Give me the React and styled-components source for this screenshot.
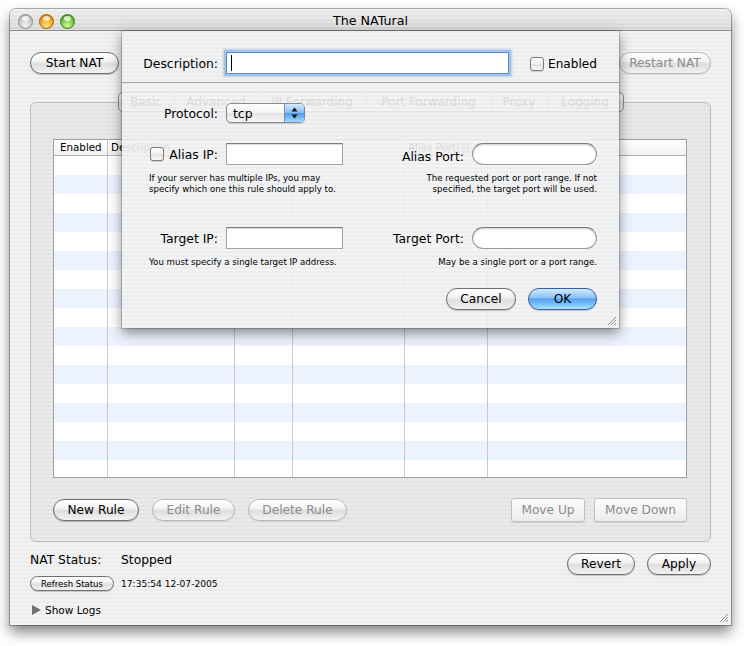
import React from 'react';
import styled, { createGlobalStyle, css } from 'styled-components';

const pinstripe = `repeating-linear-gradient(to bottom, #ececec 0px, #ececec 2px, #f3f3f3 2px, #f3f3f3 4px)`;

const GlobalStyle = createGlobalStyle`
  html, body { margin: 0; padding: 0; background: #fff; }
  body { font-family: "DejaVu Sans", "Noto Sans", sans-serif; color: #000; }
  * { box-sizing: border-box; }
`;

const Page = styled.div`
  width: 748px;
  height: 646px;
  padding: 9px 0 0 10px;
`;

const Window = styled.div`
  width: 721px;
  height: 616px;
  border-radius: 6px 6px 0 0;
  box-shadow: 0 0 0 1px rgba(0, 0, 0, 0.3), 0 7px 14px rgba(0, 0, 0, 0.5);
  background: ${pinstripe};
  display: flex;
  flex-direction: column;
  overflow: hidden;
`;

const TitleBar = styled.div`
  height: 22px;
  padding-top: 3px;
  display: grid;
  grid-template-columns: 1fr auto 1fr;
  align-items: center;
  border-bottom: 1px solid #8c8c8c;
  background: repeating-linear-gradient(to bottom, rgba(255,255,255,0.25) 0 2px, rgba(0,0,0,0) 2px 4px),
    linear-gradient(#ececec, #d3d3d3);
  border-radius: 6px 6px 0 0;
`;

const Lights = styled.div`
  display: flex;
  gap: 6px;
  padding-left: 8px;
`;

const lightColors = {
  gray: ['#f6f6f6', '#c9c9c9', '#9e9e9e', '#8a8a8a'],
  orange: ['#ffe08a', '#f5a21e', '#c66a00', '#a65a00'],
  green: ['#d4fa9a', '#70c43c', '#3c8a1a', '#367a18'],
};

const Light = styled.span`
  position: relative;
  width: 15px;
  height: 15px;
  border-radius: 50%;
  border: 1px solid ${p => lightColors[p.$c][3]};
  background: radial-gradient(circle at 50% 80%, ${p => lightColors[p.$c][0]} 0%, ${p => lightColors[p.$c][1]} 55%, ${p => lightColors[p.$c][2]} 100%);
  &::after {
    content: '';
    position: absolute;
    left: 3px;
    top: 1px;
    width: 7px;
    height: 5px;
    border-radius: 50%;
    background: rgba(255, 255, 255, 0.75);
  }
`;

const Title = styled.div`
  font-size: 12.7px;
  line-height: 18px;
`;

const Content = styled.div`
  position: relative;
  flex: 1;
  padding: 21px 20px 0;
`;

const Toolbar = styled.div`
  display: flex;
  justify-content: space-between;
`;

const PushButton = styled.div`
  width: ${p => p.$w}px;
  height: ${p => (p.$small ? 15 : 22)}px;
  border-radius: ${p => (p.$small ? 8 : 11)}px;
  display: flex;
  align-items: center;
  justify-content: center;
  font-size: ${p => (p.$small ? 8.5 : 12.2)}px;
  color: ${p => (p.$disabled ? '#8c8c8c' : '#000')};
  border: 1px solid ${p => (p.$disabled ? '#b9b9b9' : '#6f6f6f')};
  background: linear-gradient(#ffffff 0%, #f4f4f4 40%, #dedede 55%, #f2f2f2 100%);
  box-shadow: 0 1px 1px rgba(0, 0, 0, ${p => (p.$disabled ? 0.06 : 0.2)});
  ${p => p.$primary && css`
    border-color: #36619f;
    background: linear-gradient(#d4eafd 0%, #8cc5f8 42%, #58a3f0 52%, #7fc6fb 80%, #b3e1fe 100%);
  `}
`;

const BevelButton = styled.div`
  width: ${p => p.$w}px;
  height: 24px;
  border-radius: 3px;
  display: flex;
  align-items: center;
  justify-content: center;
  font-size: 12.2px;
  color: #8a8a8a;
  border: 1px solid #c2c2c2;
  background: linear-gradient(#fbfbfb, #ededed);
  box-shadow: 0 1px 1px rgba(0, 0, 0, 0.1);
`;

const TabView = styled.div`
  margin-top: 18px;
`;

const TabStrip = styled.div`
  position: relative;
  z-index: 1;
  display: flex;
  justify-content: center;
  margin-bottom: -10px;
`;

const Segments = styled.div`
  display: flex;
  height: 20px;
  border: 1px solid #8c8c8c;
  border-radius: 5px;
  overflow: hidden;
  background: linear-gradient(#ffffff, #f3f3f3 50%, #e4e4e4 51%, #f6f6f6);
`;

const Tab = styled.div`
  width: ${p => p.$w}px;
  display: flex;
  align-items: center;
  justify-content: center;
  font-size: 12px;
  border-left: ${p => (p.$first ? 'none' : '1px solid #a8a8a8')};
`;

const GroupBox = styled.div`
  border: 1px solid #bcbcbc;
  border-radius: 6px;
  background: rgba(0, 0, 0, 0.035);
  padding: 36px 23px 19px 22px;
`;

const Table = styled.div`
  height: 339px;
  border: 1px solid #9f9f9f;
  background: #fff;
  display: flex;
  flex-direction: column;
`;

const HeaderRow = styled.div`
  display: flex;
  height: 16px;
  border-bottom: 1px solid #b3b3b3;
  background: linear-gradient(#ffffff, #f1f1f1);
`;

const HeaderCell = styled.div`
  width: ${p => (p.$w ? `${p.$w}px` : 'auto')};
  flex: ${p => (p.$w ? 'none' : 1)};
  font-size: 10.3px;
  line-height: 15px;
  padding-left: ${p => p.$pad ?? 3}px;
  border-right: ${p => (p.$last ? 'none' : '1px solid #c6c6c6')};
  white-space: nowrap;
  overflow: hidden;
`;

const TableBody = styled.div`
  flex: 1;
  display: flex;
  background: repeating-linear-gradient(to bottom, #ffffff 0px, #ffffff 19px, #edf3fe 19px, #edf3fe 38px);
`;

const Column = styled.div`
  width: ${p => (p.$w ? `${p.$w}px` : 'auto')};
  flex: ${p => (p.$w ? 'none' : 1)};
  border-right: ${p => (p.$last ? 'none' : '1px solid #c9c9c9')};
`;

const RuleButtons = styled.div`
  display: flex;
  align-items: center;
  gap: 13px;
  margin-top: 20px;
`;

const MoveButtons = styled.div`
  display: flex;
  gap: 9px;
  margin-left: auto;
`;

const Footer = styled.div`
  margin-top: 11px;
  display: flex;
  justify-content: space-between;
  align-items: flex-start;
`;

const StatusBlock = styled.div`
  display: flex;
  flex-direction: column;
`;

const StatusLine = styled.div`
  display: flex;
  font-size: 12.3px;
  line-height: 15px;
`;

const StatusLabel = styled.span`
  width: 91px;
`;

const RefreshRow = styled.div`
  margin-top: 8px;
  display: flex;
  align-items: center;
  gap: 7px;
`;

const Timestamp = styled.span`
  font-size: 9.1px;
`;

const Disclosure = styled.div`
  margin-top: 12px;
  margin-left: 2px;
  display: flex;
  align-items: center;
  gap: 4px;
  font-size: 10.5px;
  line-height: 14px;
`;

const ApplyButtons = styled.div`
  display: flex;
  gap: 12px;
`;

const Grip = styled.svg`
  position: absolute;
  right: 2px;
  bottom: 2px;
`;

/* ---- sheet ---- */

const Sheet = styled.div`
  position: absolute;
  left: 112px;
  top: 0;
  width: 497px;
  height: 297px;
  background: repeating-linear-gradient(to bottom, rgba(236,236,236,0.9) 0px, rgba(236,236,236,0.9) 2px, rgba(243,243,243,0.9) 2px, rgba(243,243,243,0.9) 4px);
  box-shadow: 0 0 0 1px rgba(0, 0, 0, 0.18), 0 5px 12px rgba(0, 0, 0, 0.45);
  display: flex;
  flex-direction: column;
  z-index: 2;
`;

const FormRow = styled.div`
  display: flex;
  align-items: center;
  height: ${p => p.$h ?? 22}px;
  margin-top: ${p => p.$mt}px;
  padding-left: 27px;
  padding-right: 22px;
`;

const FieldLabel = styled.div`
  width: ${p => p.$w}px;
  padding-right: 8px;
  padding-top: ${p => p.$drop ?? 0}px;
  display: flex;
  align-items: center;
  justify-content: flex-end;
  gap: 5px;
  font-size: 12.4px;
  white-space: nowrap;
`;

const Separator = styled.div`
  margin-top: 8px;
  height: 1px;
  background: #a2a2a2;
`;

const TextField = styled.div`
  width: ${p => p.$w}px;
  height: 22px;
  background: #fff;
  border: 1px solid #a3a3a3;
  border-top-color: #7e7e7e;
  box-shadow: inset 0 1px 1px rgba(0, 0, 0, 0.15);
  display: flex;
  align-items: center;
  ${p => p.$round && css`
    border-radius: 11px;
    border-color: #9a9a9a;
    border-top-color: #7a7a7a;
    box-shadow: inset 0 1px 2px rgba(0, 0, 0, 0.2);
  `}
  ${p => p.$focus && css`
    border-color: #5f8bc8;
    box-shadow: 0 0 0 2px #a3c2ea, 0 0 2px 3px rgba(120, 165, 225, 0.45);
  `}
`;

const Caret = styled.span`
  width: 1px;
  height: 16px;
  margin-left: 4px;
  background: #000;
`;

const CheckBox = styled.span`
  width: 14px;
  height: 14px;
  flex: none;
  border-radius: 3px;
  border: 1px solid #7b7b7b;
  background: linear-gradient(#ffffff, #f0f0f0 50%, #e0e0e0 51%, #f7f7f7);
  box-shadow: 0 1px 1px rgba(0, 0, 0, 0.15);
`;

const CheckLabel = styled.div`
  margin-left: 21px;
  margin-top: 2px;
  display: flex;
  align-items: center;
  gap: 4px;
  font-size: 12.1px;
`;

const Popup = styled.div`
  width: 79px;
  height: 20px;
  display: flex;
  border: 1px solid #8a8a8a;
  border-radius: 5px;
  overflow: hidden;
  background: linear-gradient(#ffffff, #f4f4f4 50%, #e3e3e3 51%, #f7f7f7);
  box-shadow: 0 1px 1px rgba(0, 0, 0, 0.15);
`;

const PopupText = styled.span`
  flex: 1;
  padding-left: 6px;
  font-size: 12.4px;
  line-height: 19px;
`;

const PopupArrows = styled.span`
  width: 20px;
  display: flex;
  align-items: center;
  justify-content: center;
  border-left: 1px solid #6b8fc2;
  background: linear-gradient(#d6ebfd, #86bef5 48%, #519aea 52%, #a6dafe);
`;

const HelpRow = styled.div`
  display: flex;
  margin-top: ${p => p.$mt}px;
  padding-left: 27px;
  padding-right: 22px;
`;

const Help = styled.div`
  width: ${p => (p.$w ? `${p.$w}px` : 'auto')};
  flex: ${p => (p.$w ? 'none' : 1)};
  text-align: ${p => (p.$right ? 'right' : 'left')};
  font-size: 8.65px;
  line-height: 11px;
  white-space: nowrap;
`;

const SheetButtons = styled.div`
  margin-top: 20px;
  padding-right: 22px;
  display: flex;
  justify-content: flex-end;
  gap: 12px;
`;

function ResizeGrip() {
  return (
    <Grip width="11" height="11" viewBox="0 0 11 11">
      <path d="M10 2 L2 10 M10 5 L5 10 M10 8 L8 10" stroke="#8d8d8d" strokeWidth="1" />
      <path d="M10.8 2.8 L2.8 10.8 M10.8 5.8 L5.8 10.8 M10.8 8.8 L8.8 10.8" stroke="#fff" strokeWidth="0.8" />
    </Grip>
  );
}

const columns = [
  { label: 'Enabled', w: 54, pad: 6 },
  { label: 'Description', w: 127 },
  { label: 'Protocol', w: 58 },
  { label: 'Alias IP', w: 112 },
  { label: 'Alias Port(s)', w: 83 },
  { label: 'Target' },
];

const tabs = [
  ['Basic', 55], ['Advanced', 84], ['IP Forwarding', 108],
  ['Port Forwarding', 125], ['Proxy', 56], ['Logging', 76],
];

export default function App() {
  return (
    <>
      <GlobalStyle />
      <Page>
        <Window>
          <TitleBar>
            <Lights>
              <Light $c="gray" />
              <Light $c="orange" />
              <Light $c="green" />
            </Lights>
            <Title>The NATural</Title>
            <div />
          </TitleBar>
          <Content>
            <Toolbar>
              <PushButton $w={89}>Start NAT</PushButton>
              <PushButton $w={92} $disabled>Restart NAT</PushButton>
            </Toolbar>

            <TabView>
              <TabStrip>
                <Segments>
                  {tabs.map(([t, w], i) => (
                    <Tab key={t} $w={w} $first={i === 0}>{t}</Tab>
                  ))}
                </Segments>
              </TabStrip>
              <GroupBox>
                <Table>
                  <HeaderRow>
                    {columns.map((c, i) => (
                      <HeaderCell key={c.label} $w={c.w} $pad={c.pad} $last={i === columns.length - 1}>
                        {c.label}
                      </HeaderCell>
                    ))}
                  </HeaderRow>
                  <TableBody>
                    {columns.map((c, i) => (
                      <Column key={c.label} $w={c.w} $last={i === columns.length - 1} />
                    ))}
                  </TableBody>
                </Table>
                <RuleButtons>
                  <PushButton $w={86}>New Rule</PushButton>
                  <PushButton $w={83} $disabled>Edit Rule</PushButton>
                  <PushButton $w={99} $disabled>Delete Rule</PushButton>
                  <MoveButtons>
                    <BevelButton $w={74}>Move Up</BevelButton>
                    <BevelButton $w={93}>Move Down</BevelButton>
                  </MoveButtons>
                </RuleButtons>
              </GroupBox>
            </TabView>

            <Footer>
              <StatusBlock>
                <StatusLine>
                  <StatusLabel>NAT Status:</StatusLabel>
                  <span>Stopped</span>
                </StatusLine>
                <RefreshRow>
                  <PushButton $w={84} $small>Refresh Status</PushButton>
                  <Timestamp>17:35:54 12-07-2005</Timestamp>
                </RefreshRow>
                <Disclosure>
                  <svg width="9" height="10" viewBox="0 0 9 10">
                    <path d="M0 0 L9 5 L0 10 Z" fill="#707070" />
                  </svg>
                  Show Logs
                </Disclosure>
              </StatusBlock>
              <ApplyButtons>
                <PushButton $w={68}>Revert</PushButton>
                <PushButton $w={64}>Apply</PushButton>
              </ApplyButtons>
            </Footer>

            <Sheet>
              <FormRow $mt={21}>
                <FieldLabel $w={77}>Description:</FieldLabel>
                <TextField $w={283} $focus>
                  <Caret />
                </TextField>
                <CheckLabel>
                  <CheckBox />
                  Enabled
                </CheckLabel>
              </FormRow>
              <Separator />
              <FormRow $mt={20} $h={20}>
                <FieldLabel $w={77}>Protocol:</FieldLabel>
                <Popup>
                  <PopupText>tcp</PopupText>
                  <PopupArrows>
                    <svg width="7" height="12" viewBox="0 0 7 12">
                      <path d="M3.5 0.5 L6.5 4.5 L0.5 4.5 Z M3.5 11.5 L6.5 7.5 L0.5 7.5 Z" fill="#111" />
                    </svg>
                  </PopupArrows>
                </Popup>
              </FormRow>
              <FormRow $mt={20}>
                <FieldLabel $w={77}>
                  <CheckBox />
                  Alias IP:
                </FieldLabel>
                <TextField $w={117} />
                <FieldLabel $w={129} $drop={4}>Alias Port:</FieldLabel>
                <TextField $w={125} $round />
              </FormRow>
              <HelpRow $mt={8}>
                <Help $w={194}>
                  If your server has multiple IPs, you may<br />
                  specify which one this rule should apply to.
                </Help>
                <Help $right>
                  The requested port or port range. If not<br />
                  specified, the target port will be used.
                </Help>
              </HelpRow>
              <FormRow $mt={32}>
                <FieldLabel $w={77}>Target IP:</FieldLabel>
                <TextField $w={117} />
                <FieldLabel $w={129}>Target Port:</FieldLabel>
                <TextField $w={125} $round />
              </FormRow>
              <HelpRow $mt={8}>
                <Help $w={194}>You must specify a single target IP address.</Help>
                <Help $right>May be a single port or a port range.</Help>
              </HelpRow>
              <SheetButtons>
                <PushButton $w={70}>Cancel</PushButton>
                <PushButton $w={69} $primary>OK</PushButton>
              </SheetButtons>
              <ResizeGrip />
            </Sheet>

            <ResizeGrip />
          </Content>
        </Window>
      </Page>
    </>
  );
}
